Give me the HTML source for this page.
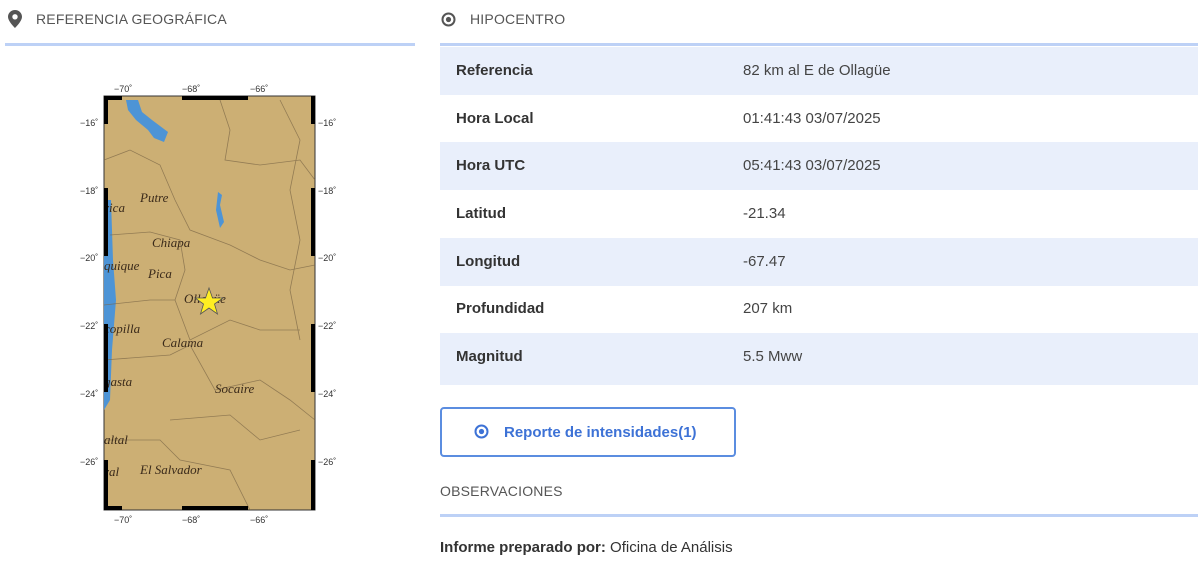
<!DOCTYPE html>
<html><head><meta charset="utf-8"><style>
body{margin:0;width:1200px;height:567px;background:#fff;font-family:"Liberation Sans",sans-serif;color:#333;position:relative;overflow:hidden}
.a{position:absolute}
.h{font-size:14px;color:#555;letter-spacing:.2px}
.line{height:3px;background:#bdd1f6}
.row{position:absolute;left:440px;width:758px;height:48px;font-size:15px}
.row.s{background:#e9effb}
.row b{position:absolute;left:16px;top:15px;font-weight:bold;color:#333}
.row span{position:absolute;left:303px;top:15px;color:#444}
</style></head><body>
<svg class="a" style="left:8px;top:10px" width="14" height="18" viewBox="0 0 14 18"><path d="M7 0C3.1 0 0 3 0 6.8 0 11.5 7 18 7 18s7-6.5 7-11.2C14 3 10.9 0 7 0zm0 9.5a2.7 2.7 0 110-5.4 2.7 2.7 0 010 5.4z" fill="#555"/></svg>
<div class="a h" style="left:36px;top:11px">REFERENCIA GEOGRÁFICA</div>
<div class="a line" style="left:5px;top:43px;width:410px"></div>
<svg class="a" style="left:441px;top:12px" width="15" height="15" viewBox="0 0 15 15"><circle cx="7.5" cy="7.5" r="6" fill="none" stroke="#555" stroke-width="2"/><circle cx="7.5" cy="7.5" r="2.6" fill="#555"/></svg>
<div class="a h" style="left:470px;top:11px">HIPOCENTRO</div>
<div class="a line" style="left:440px;top:43px;width:758px"></div>
<div class="row s" style="top:47px"><b>Referencia</b><span>82 km al E de Ollagüe</span></div>
<div class="row" style="top:95px"><b>Hora Local</b><span>01:41:43 03/07/2025</span></div>
<div class="row s" style="top:142px"><b>Hora UTC</b><span>05:41:43 03/07/2025</span></div>
<div class="row" style="top:190px"><b>Latitud</b><span>-21.34</span></div>
<div class="row s" style="top:238px"><b>Longitud</b><span>-67.47</span></div>
<div class="row" style="top:285px"><b>Profundidad</b><span>207 km</span></div>
<div class="row s" style="top:333px;height:52px"><b>Magnitud</b><span>5.5 Mww</span></div>
<div class="a" style="left:440px;top:407px;width:292px;height:46px;border:2px solid #5b8de0;border-radius:4px"></div>
<svg class="a" style="left:474px;top:424px" width="15" height="15" viewBox="0 0 15 15"><circle cx="7.5" cy="7.5" r="6" fill="none" stroke="#3d72d6" stroke-width="2"/><circle cx="7.5" cy="7.5" r="2.6" fill="#3d72d6"/></svg>
<div class="a" style="left:504px;top:424px;font-size:15px;font-weight:bold;color:#3d72d6">Reporte de intensidades(1)</div>
<div class="a h" style="left:440px;top:483px">OBSERVACIONES</div>
<div class="a line" style="left:440px;top:514px;width:758px"></div>
<div class="a" style="left:440px;top:539px;font-size:15px;color:#333"><b>Informe preparado por:</b> Oficina de Análisis</div>
<svg class="a" style="left:70px;top:80px" width="290" height="450" viewBox="70 80 290 450" font-family="Liberation Sans" font-size="9" fill="#333">
<rect x="104" y="96" width="211" height="414" fill="#ccaf74" stroke="#333" stroke-width="1"/>
<path d="M104 200 L111 200 L113 260 L116 300 L112 350 L110 400 L104 410Z" fill="#4d94d6"/>
<path d="M126 100 L138 100 L142 112 L152 120 L160 126 L168 132 L164 142 L154 138 L148 130 L136 120 L128 110Z" fill="#4d94d6"/>
<path d="M218 192 L222 195 L220 205 L224 222 L220 228 L216 210Z" fill="#4d94d6"/>
<g fill="none" stroke="#7a6646" stroke-width=".8" opacity=".7">
<path d="M104 160 L130 150 L160 165 L175 200 L190 230 L230 245 L260 260 L290 270 L315 265"/>
<path d="M110 235 L150 232 L180 240 L185 270 L175 300 L190 340 L230 320 L260 330 L300 330"/>
<path d="M220 100 L230 130 L225 160 L260 165 L300 160 L315 180"/>
<path d="M104 305 L150 300 L175 300"/><path d="M104 360 L170 355 L190 345 L215 390 L260 380 L290 400 L315 420"/>
<path d="M170 420 L230 415 L260 440 L300 430"/><path d="M104 440 L160 440 L180 460 L230 470 L250 510"/>
<path d="M280 100 L300 140 L290 190 L300 240 L290 290 L300 340"/>
</g>
<g font-family="Liberation Serif" font-style="italic" font-size="13" fill="#3a2a1a">
<text x="140" y="202">Putre</text><text x="104" y="212">rica</text><text x="152" y="247">Chiapa</text><text x="104" y="270">quique</text><text x="148" y="278">Pica</text><text x="184" y="303">Ollagüe</text><text x="104" y="333">copilla</text><text x="162" y="347">Calama</text><text x="104" y="386">gasta</text><text x="215" y="393">Socaire</text><text x="104" y="444">altal</text><text x="104" y="476">ral</text><text x="140" y="474">El Salvador</text>
</g>
<polygon points="209,288 212.5,298 223,298 214.5,304 217.5,314 209,308 200.5,314 203.5,304 195,298 205.5,298" fill="#ffee22" stroke="#555" stroke-width=".8"/>
<g fill="#000"><rect x="104" y="96" width="18" height="4"/><rect x="182" y="96" width="66" height="4"/><rect x="104" y="506" width="18" height="4"/><rect x="182" y="506" width="66" height="4"/>
<rect x="104" y="96" width="4" height="28"/><rect x="104" y="188" width="4" height="68"/><rect x="104" y="324" width="4" height="68"/><rect x="104" y="460" width="4" height="50"/>
<rect x="311" y="96" width="4" height="28"/><rect x="311" y="188" width="4" height="68"/><rect x="311" y="324" width="4" height="68"/><rect x="311" y="460" width="4" height="50"/></g>
<text x="114" y="92">−70˚</text><text x="182" y="92">−68˚</text><text x="250" y="92">−66˚</text>
<text x="114" y="523">−70˚</text><text x="182" y="523">−68˚</text><text x="250" y="523">−66˚</text>
<g><text x="80" y="126">−16˚</text><text x="80" y="194">−18˚</text><text x="80" y="261">−20˚</text><text x="80" y="329">−22˚</text><text x="80" y="397">−24˚</text><text x="80" y="465">−26˚</text>
<text x="318" y="126">−16˚</text><text x="318" y="194">−18˚</text><text x="318" y="261">−20˚</text><text x="318" y="329">−22˚</text><text x="318" y="397">−24˚</text><text x="318" y="465">−26˚</text></g>
</svg>
</body></html>
